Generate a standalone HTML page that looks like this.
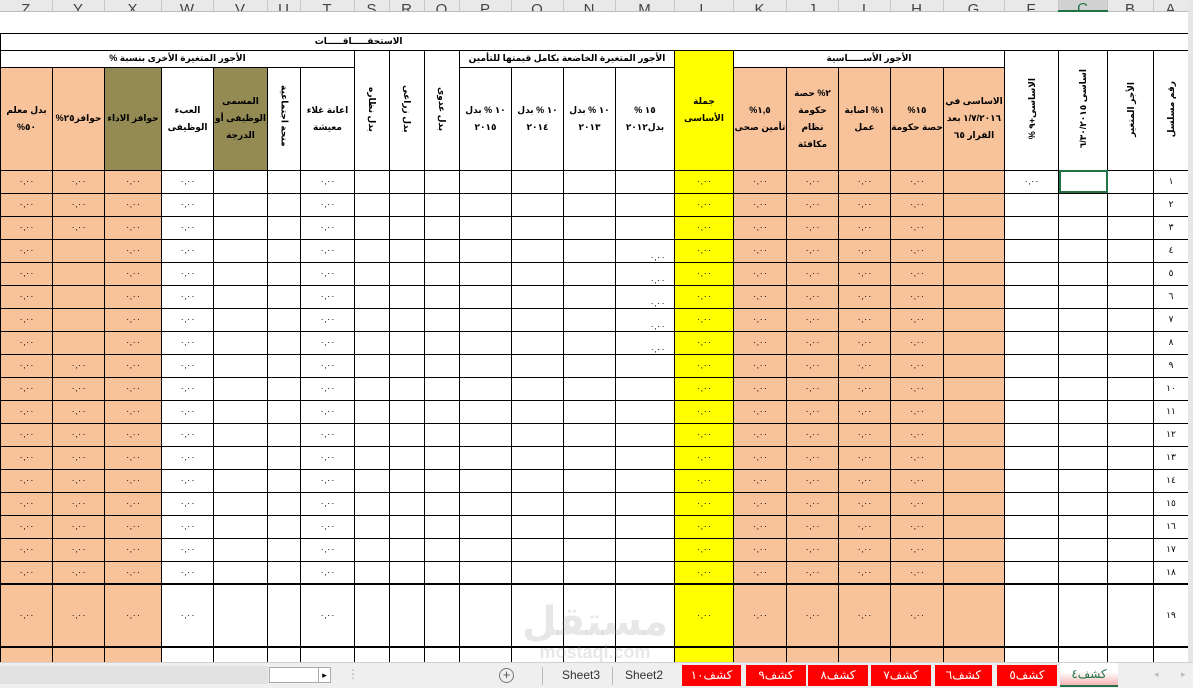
<!DOCTYPE html>
<html><head><meta charset="utf-8"><style>
*{margin:0;padding:0;box-sizing:border-box}
body{width:1193px;height:688px;overflow:hidden;background:#fff;position:relative;font-family:"Liberation Sans","DejaVu Sans",sans-serif}
table{border-collapse:collapse;table-layout:fixed;position:absolute;left:0}
td{overflow:hidden;white-space:nowrap;text-align:center;vertical-align:middle;padding:0}
#hd{top:0;height:11px;width:1188px}
#hd td{background:#e9e9e9;border-right:1px solid #c8c8c8;border-bottom:1px solid #bdbdbd;color:#444;font-size:15px;height:11px;line-height:3px;vertical-align:bottom}
#hd td.sel{background:#d2d2d2;color:#217346;border-bottom:2px solid #217346}
#m{top:11px;width:1188px;font-size:9px;font-weight:bold}
#m td{border:1px solid #000;direction:rtl}
#m tr.e td{border:none;border-bottom:1px solid #000;height:22px}
#m tr.t td{height:17px}
.o{background:#f8c39b}.ol{background:#948a54}.y{background:#ffff00}
.vr{writing-mode:vertical-rl}
.vl{writing-mode:vertical-rl;transform:rotate(180deg)}
#m tr.h td{height:103px;white-space:normal;line-height:17px;font-size:9px}
#m tr.d td{height:23px;font-weight:normal;font-size:8px}
#m tr.d td:nth-child(1),#m tr.d td:nth-child(2),#m tr.d td:nth-child(3),#m tr.d td:nth-child(16),#m tr.d td:nth-child(17),#m tr.d td:nth-child(18),#m tr.d td:nth-child(19),#m tr.d td:nth-child(20){background:#f8c39b}
#m tr.d td:nth-child(15){background:#ff0}
#m tr.d td:nth-child(24){font-size:9px}
#m tr.d td.mr{text-align:left;vertical-align:bottom;padding-left:34px}
#m tr.d td.sc{outline:2px solid #217346;outline-offset:-2px}
#m tr.big td{height:63px;border-top:2px solid #000;border-bottom:2px solid #000}
#m tr.p td{height:15px}
#rs{position:absolute;left:1188px;top:0;width:5px;height:662px;background:#e6e6e6}
#tb{position:absolute;left:0;top:662px;width:1193px;height:26px;background:#efefef;border-top:1px solid #d0d0d0;font-size:12px}
.tab{position:absolute;top:2px;height:21px;line-height:21px;text-align:center;color:#fff;background:#f00;font-size:12px}
.gt{position:absolute;top:2px;height:21px;line-height:21px;color:#333;text-align:center}
#wm{position:absolute;left:520px;top:600px;width:150px;text-align:center;color:rgba(160,160,160,.25);font-weight:bold}
</style></head><body>
<table id="hd"><colgroup><col width="52"><col width="52"><col width="57"><col width="52"><col width="54"><col width="33"><col width="54"><col width="35"><col width="35"><col width="35"><col width="52"><col width="52"><col width="52"><col width="59"><col width="59"><col width="53"><col width="52"><col width="52"><col width="53"><col width="61"><col width="54"><col width="49"><col width="46"><col width="35"></colgroup>
<tr><td>Z</td><td>Y</td><td>X</td><td>W</td><td>V</td><td>U</td><td>T</td><td>S</td><td>R</td><td>Q</td><td>P</td><td>O</td><td>N</td><td>M</td><td>L</td><td>K</td><td>J</td><td>I</td><td>H</td><td>G</td><td>F</td><td class="sel">C</td><td>B</td><td>A</td></tr></table>
<table id="m"><colgroup><col width="52"><col width="52"><col width="57"><col width="52"><col width="54"><col width="33"><col width="54"><col width="35"><col width="35"><col width="35"><col width="52"><col width="52"><col width="52"><col width="59"><col width="59"><col width="53"><col width="52"><col width="52"><col width="53"><col width="61"><col width="54"><col width="49"><col width="46"><col width="35"></colgroup>
<tr class="e"><td colspan="24"></td></tr>
<tr class="t"><td colspan="14" style="text-align:right;padding-right:272px;border-right:none">الاستحقـــــاقـــــات</td><td colspan="10" style="border-left:none"></td></tr>
<tr class="t"><td colspan="7">الأجور المتغيرة الأخرى بنسبة %</td><td rowspan="2"><span class="vr">بدل نظاره</span></td><td rowspan="2"><span class="vr">بدل زراعى</span></td><td rowspan="2"><span class="vr">بدل عدوى</span></td><td colspan="4">الأجور المتغيرة الخاضعة بكامل قيمتها للتأمين</td><td rowspan="2" class="y" style="font-size:9px;line-height:17px;white-space:normal">جملة<br>الأساسى</td><td colspan="5">الأجور الأســـــاسية</td><td rowspan="2"><span class="vl">الاساسى+٩ %</span></td><td rowspan="2"><span class="vl">اساسى ٦/٣٠/٢٠١٥</span></td><td rowspan="2"><span class="vl">الأجر المتغير</span></td><td rowspan="2"><span class="vl">رقم مسلسل</span></td></tr>
<tr class="h"><td class="o">بدل معلم<br>٥٠%</td><td class="o">حوافز٢٥%</td><td class="ol">حوافز الاداء</td><td>العبء<br>الوظيفى</td><td class="ol">المسمى الوظيفى أو الدرجة</td><td><span class="vr">منحة اجتماعية</span></td><td>اعانة غلاء<br>معيشة</td><td>١٠ % بدل<br>٢٠١٥</td><td>١٠ % بدل<br>٢٠١٤</td><td>١٠ % بدل<br>٢٠١٣</td><td>١٥ %<br>بدل٢٠١٢</td><td class="o">١,٥%<br>تأمين صحى</td><td class="o">٢% حصة حكومة نظام مكافئة</td><td class="o">١% اصابة<br>عمل</td><td class="o">١٥%<br>حصة حكومة</td><td class="o">الاساسى في ١/٧/٢٠١٦ بعد القرار ٦٥</td></tr>
<tr class="d"><td>٠,٠٠</td><td>٠,٠٠</td><td>٠,٠٠</td><td>٠,٠٠</td><td></td><td></td><td>٠,٠٠</td><td></td><td></td><td></td><td></td><td></td><td></td><td></td><td>٠,٠٠</td><td>٠,٠٠</td><td>٠,٠٠</td><td>٠,٠٠</td><td>٠,٠٠</td><td></td><td>٠,٠٠</td><td class="sc"></td><td></td><td>١</td></tr>
<tr class="d"><td>٠,٠٠</td><td>٠,٠٠</td><td>٠,٠٠</td><td>٠,٠٠</td><td></td><td></td><td>٠,٠٠</td><td></td><td></td><td></td><td></td><td></td><td></td><td></td><td>٠,٠٠</td><td>٠,٠٠</td><td>٠,٠٠</td><td>٠,٠٠</td><td>٠,٠٠</td><td></td><td></td><td></td><td></td><td>٢</td></tr>
<tr class="d"><td>٠,٠٠</td><td>٠,٠٠</td><td>٠,٠٠</td><td>٠,٠٠</td><td></td><td></td><td>٠,٠٠</td><td></td><td></td><td></td><td></td><td></td><td></td><td></td><td>٠,٠٠</td><td>٠,٠٠</td><td>٠,٠٠</td><td>٠,٠٠</td><td>٠,٠٠</td><td></td><td></td><td></td><td></td><td>٣</td></tr>
<tr class="d"><td>٠,٠٠</td><td></td><td>٠,٠٠</td><td>٠,٠٠</td><td></td><td></td><td>٠,٠٠</td><td></td><td></td><td></td><td></td><td></td><td></td><td class="mr">٠,٠٠</td><td>٠,٠٠</td><td>٠,٠٠</td><td>٠,٠٠</td><td>٠,٠٠</td><td>٠,٠٠</td><td></td><td></td><td></td><td></td><td>٤</td></tr>
<tr class="d"><td>٠,٠٠</td><td></td><td>٠,٠٠</td><td>٠,٠٠</td><td></td><td></td><td>٠,٠٠</td><td></td><td></td><td></td><td></td><td></td><td></td><td class="mr">٠,٠٠</td><td>٠,٠٠</td><td>٠,٠٠</td><td>٠,٠٠</td><td>٠,٠٠</td><td>٠,٠٠</td><td></td><td></td><td></td><td></td><td>٥</td></tr>
<tr class="d"><td>٠,٠٠</td><td></td><td>٠,٠٠</td><td>٠,٠٠</td><td></td><td></td><td>٠,٠٠</td><td></td><td></td><td></td><td></td><td></td><td></td><td class="mr">٠,٠٠</td><td>٠,٠٠</td><td>٠,٠٠</td><td>٠,٠٠</td><td>٠,٠٠</td><td>٠,٠٠</td><td></td><td></td><td></td><td></td><td>٦</td></tr>
<tr class="d"><td>٠,٠٠</td><td></td><td>٠,٠٠</td><td>٠,٠٠</td><td></td><td></td><td>٠,٠٠</td><td></td><td></td><td></td><td></td><td></td><td></td><td class="mr">٠,٠٠</td><td>٠,٠٠</td><td>٠,٠٠</td><td>٠,٠٠</td><td>٠,٠٠</td><td>٠,٠٠</td><td></td><td></td><td></td><td></td><td>٧</td></tr>
<tr class="d"><td>٠,٠٠</td><td></td><td>٠,٠٠</td><td>٠,٠٠</td><td></td><td></td><td>٠,٠٠</td><td></td><td></td><td></td><td></td><td></td><td></td><td class="mr">٠,٠٠</td><td>٠,٠٠</td><td>٠,٠٠</td><td>٠,٠٠</td><td>٠,٠٠</td><td>٠,٠٠</td><td></td><td></td><td></td><td></td><td>٨</td></tr>
<tr class="d"><td>٠,٠٠</td><td>٠,٠٠</td><td>٠,٠٠</td><td>٠,٠٠</td><td></td><td></td><td>٠,٠٠</td><td></td><td></td><td></td><td></td><td></td><td></td><td></td><td>٠,٠٠</td><td>٠,٠٠</td><td>٠,٠٠</td><td>٠,٠٠</td><td>٠,٠٠</td><td></td><td></td><td></td><td></td><td>٩</td></tr>
<tr class="d"><td>٠,٠٠</td><td>٠,٠٠</td><td>٠,٠٠</td><td>٠,٠٠</td><td></td><td></td><td>٠,٠٠</td><td></td><td></td><td></td><td></td><td></td><td></td><td></td><td>٠,٠٠</td><td>٠,٠٠</td><td>٠,٠٠</td><td>٠,٠٠</td><td>٠,٠٠</td><td></td><td></td><td></td><td></td><td>١٠</td></tr>
<tr class="d"><td>٠,٠٠</td><td>٠,٠٠</td><td>٠,٠٠</td><td>٠,٠٠</td><td></td><td></td><td>٠,٠٠</td><td></td><td></td><td></td><td></td><td></td><td></td><td></td><td>٠,٠٠</td><td>٠,٠٠</td><td>٠,٠٠</td><td>٠,٠٠</td><td>٠,٠٠</td><td></td><td></td><td></td><td></td><td>١١</td></tr>
<tr class="d"><td>٠,٠٠</td><td>٠,٠٠</td><td>٠,٠٠</td><td>٠,٠٠</td><td></td><td></td><td>٠,٠٠</td><td></td><td></td><td></td><td></td><td></td><td></td><td></td><td>٠,٠٠</td><td>٠,٠٠</td><td>٠,٠٠</td><td>٠,٠٠</td><td>٠,٠٠</td><td></td><td></td><td></td><td></td><td>١٢</td></tr>
<tr class="d"><td>٠,٠٠</td><td>٠,٠٠</td><td>٠,٠٠</td><td>٠,٠٠</td><td></td><td></td><td>٠,٠٠</td><td></td><td></td><td></td><td></td><td></td><td></td><td></td><td>٠,٠٠</td><td>٠,٠٠</td><td>٠,٠٠</td><td>٠,٠٠</td><td>٠,٠٠</td><td></td><td></td><td></td><td></td><td>١٣</td></tr>
<tr class="d"><td>٠,٠٠</td><td>٠,٠٠</td><td>٠,٠٠</td><td>٠,٠٠</td><td></td><td></td><td>٠,٠٠</td><td></td><td></td><td></td><td></td><td></td><td></td><td></td><td>٠,٠٠</td><td>٠,٠٠</td><td>٠,٠٠</td><td>٠,٠٠</td><td>٠,٠٠</td><td></td><td></td><td></td><td></td><td>١٤</td></tr>
<tr class="d"><td>٠,٠٠</td><td>٠,٠٠</td><td>٠,٠٠</td><td>٠,٠٠</td><td></td><td></td><td>٠,٠٠</td><td></td><td></td><td></td><td></td><td></td><td></td><td></td><td>٠,٠٠</td><td>٠,٠٠</td><td>٠,٠٠</td><td>٠,٠٠</td><td>٠,٠٠</td><td></td><td></td><td></td><td></td><td>١٥</td></tr>
<tr class="d"><td>٠,٠٠</td><td>٠,٠٠</td><td>٠,٠٠</td><td>٠,٠٠</td><td></td><td></td><td>٠,٠٠</td><td></td><td></td><td></td><td></td><td></td><td></td><td></td><td>٠,٠٠</td><td>٠,٠٠</td><td>٠,٠٠</td><td>٠,٠٠</td><td>٠,٠٠</td><td></td><td></td><td></td><td></td><td>١٦</td></tr>
<tr class="d"><td>٠,٠٠</td><td>٠,٠٠</td><td>٠,٠٠</td><td>٠,٠٠</td><td></td><td></td><td>٠,٠٠</td><td></td><td></td><td></td><td></td><td></td><td></td><td></td><td>٠,٠٠</td><td>٠,٠٠</td><td>٠,٠٠</td><td>٠,٠٠</td><td>٠,٠٠</td><td></td><td></td><td></td><td></td><td>١٧</td></tr>
<tr class="d"><td>٠,٠٠</td><td>٠,٠٠</td><td>٠,٠٠</td><td>٠,٠٠</td><td></td><td></td><td>٠,٠٠</td><td></td><td></td><td></td><td></td><td></td><td></td><td></td><td>٠,٠٠</td><td>٠,٠٠</td><td>٠,٠٠</td><td>٠,٠٠</td><td>٠,٠٠</td><td></td><td></td><td></td><td></td><td>١٨</td></tr>
<tr class="d big"><td>٠,٠٠</td><td>٠,٠٠</td><td>٠,٠٠</td><td>٠,٠٠</td><td></td><td></td><td>٠,٠٠</td><td></td><td></td><td></td><td></td><td></td><td></td><td></td><td>٠,٠٠</td><td>٠,٠٠</td><td>٠,٠٠</td><td>٠,٠٠</td><td>٠,٠٠</td><td></td><td></td><td></td><td></td><td>١٩</td></tr>
<tr class="d p"><td></td><td></td><td></td><td></td><td></td><td></td><td></td><td></td><td></td><td></td><td></td><td></td><td></td><td></td><td></td><td></td><td></td><td></td><td></td><td></td><td></td><td></td><td></td><td></td></tr>
</table>
<div id="wm"><div style="font-size:40px;line-height:44px">مستقل</div><div style="font-size:18px;line-height:16px">mostaql.com</div></div>
<div id="rs"></div>
<div id="tb">
<div style="position:absolute;left:0;top:3px;width:268px;height:18px;background:#e2e2e2"></div>
<div style="position:absolute;left:269px;top:4px;width:50px;height:16px;background:#fff;border:1px solid #aaa"></div>
<div style="position:absolute;left:318px;top:4px;width:13px;height:16px;background:#fff;border:1px solid #aaa;font-size:9px;line-height:14px;text-align:center">▸</div>
<div style="position:absolute;left:347px;top:4px;color:#aaa;font-size:12px">⋮</div>
<div style="position:absolute;left:499px;top:5px;width:15px;height:15px;border:1px solid #777;border-radius:50%;text-align:center;line-height:12px;font-size:13px;color:#555">+</div>
<div style="position:absolute;left:542px;top:4px;width:1px;height:18px;background:#bbb"></div>
<div class="gt" style="left:550px;width:62px">Sheet3</div>
<div style="position:absolute;left:612px;top:4px;width:1px;height:18px;background:#bbb"></div>
<div class="gt" style="left:613px;width:62px">Sheet2</div>
<div class="tab" style="left:682px;width:59px">كشف١٠</div>
<div class="tab" style="left:746px;width:60px">كشف٩</div>
<div class="tab" style="left:808px;width:60px">كشف٨</div>
<div class="tab" style="left:871px;width:60px">كشف٧</div>
<div class="tab" style="left:935px;width:57px">كشف٦</div>
<div class="tab" style="left:997px;width:60px">كشف٥</div>
<div class="tab" style="left:1060px;width:58px;top:0;height:24px;line-height:22px;background:linear-gradient(#fff 40%,#f4b7b7);color:#217346;border-bottom:2px solid #217346">كشف٤</div>
<div style="position:absolute;left:1154px;top:6px;color:#bbb;font-size:9px">◂</div>
<div style="position:absolute;left:1181px;top:6px;color:#bbb;font-size:9px">▸</div>
</div>
</body></html>
